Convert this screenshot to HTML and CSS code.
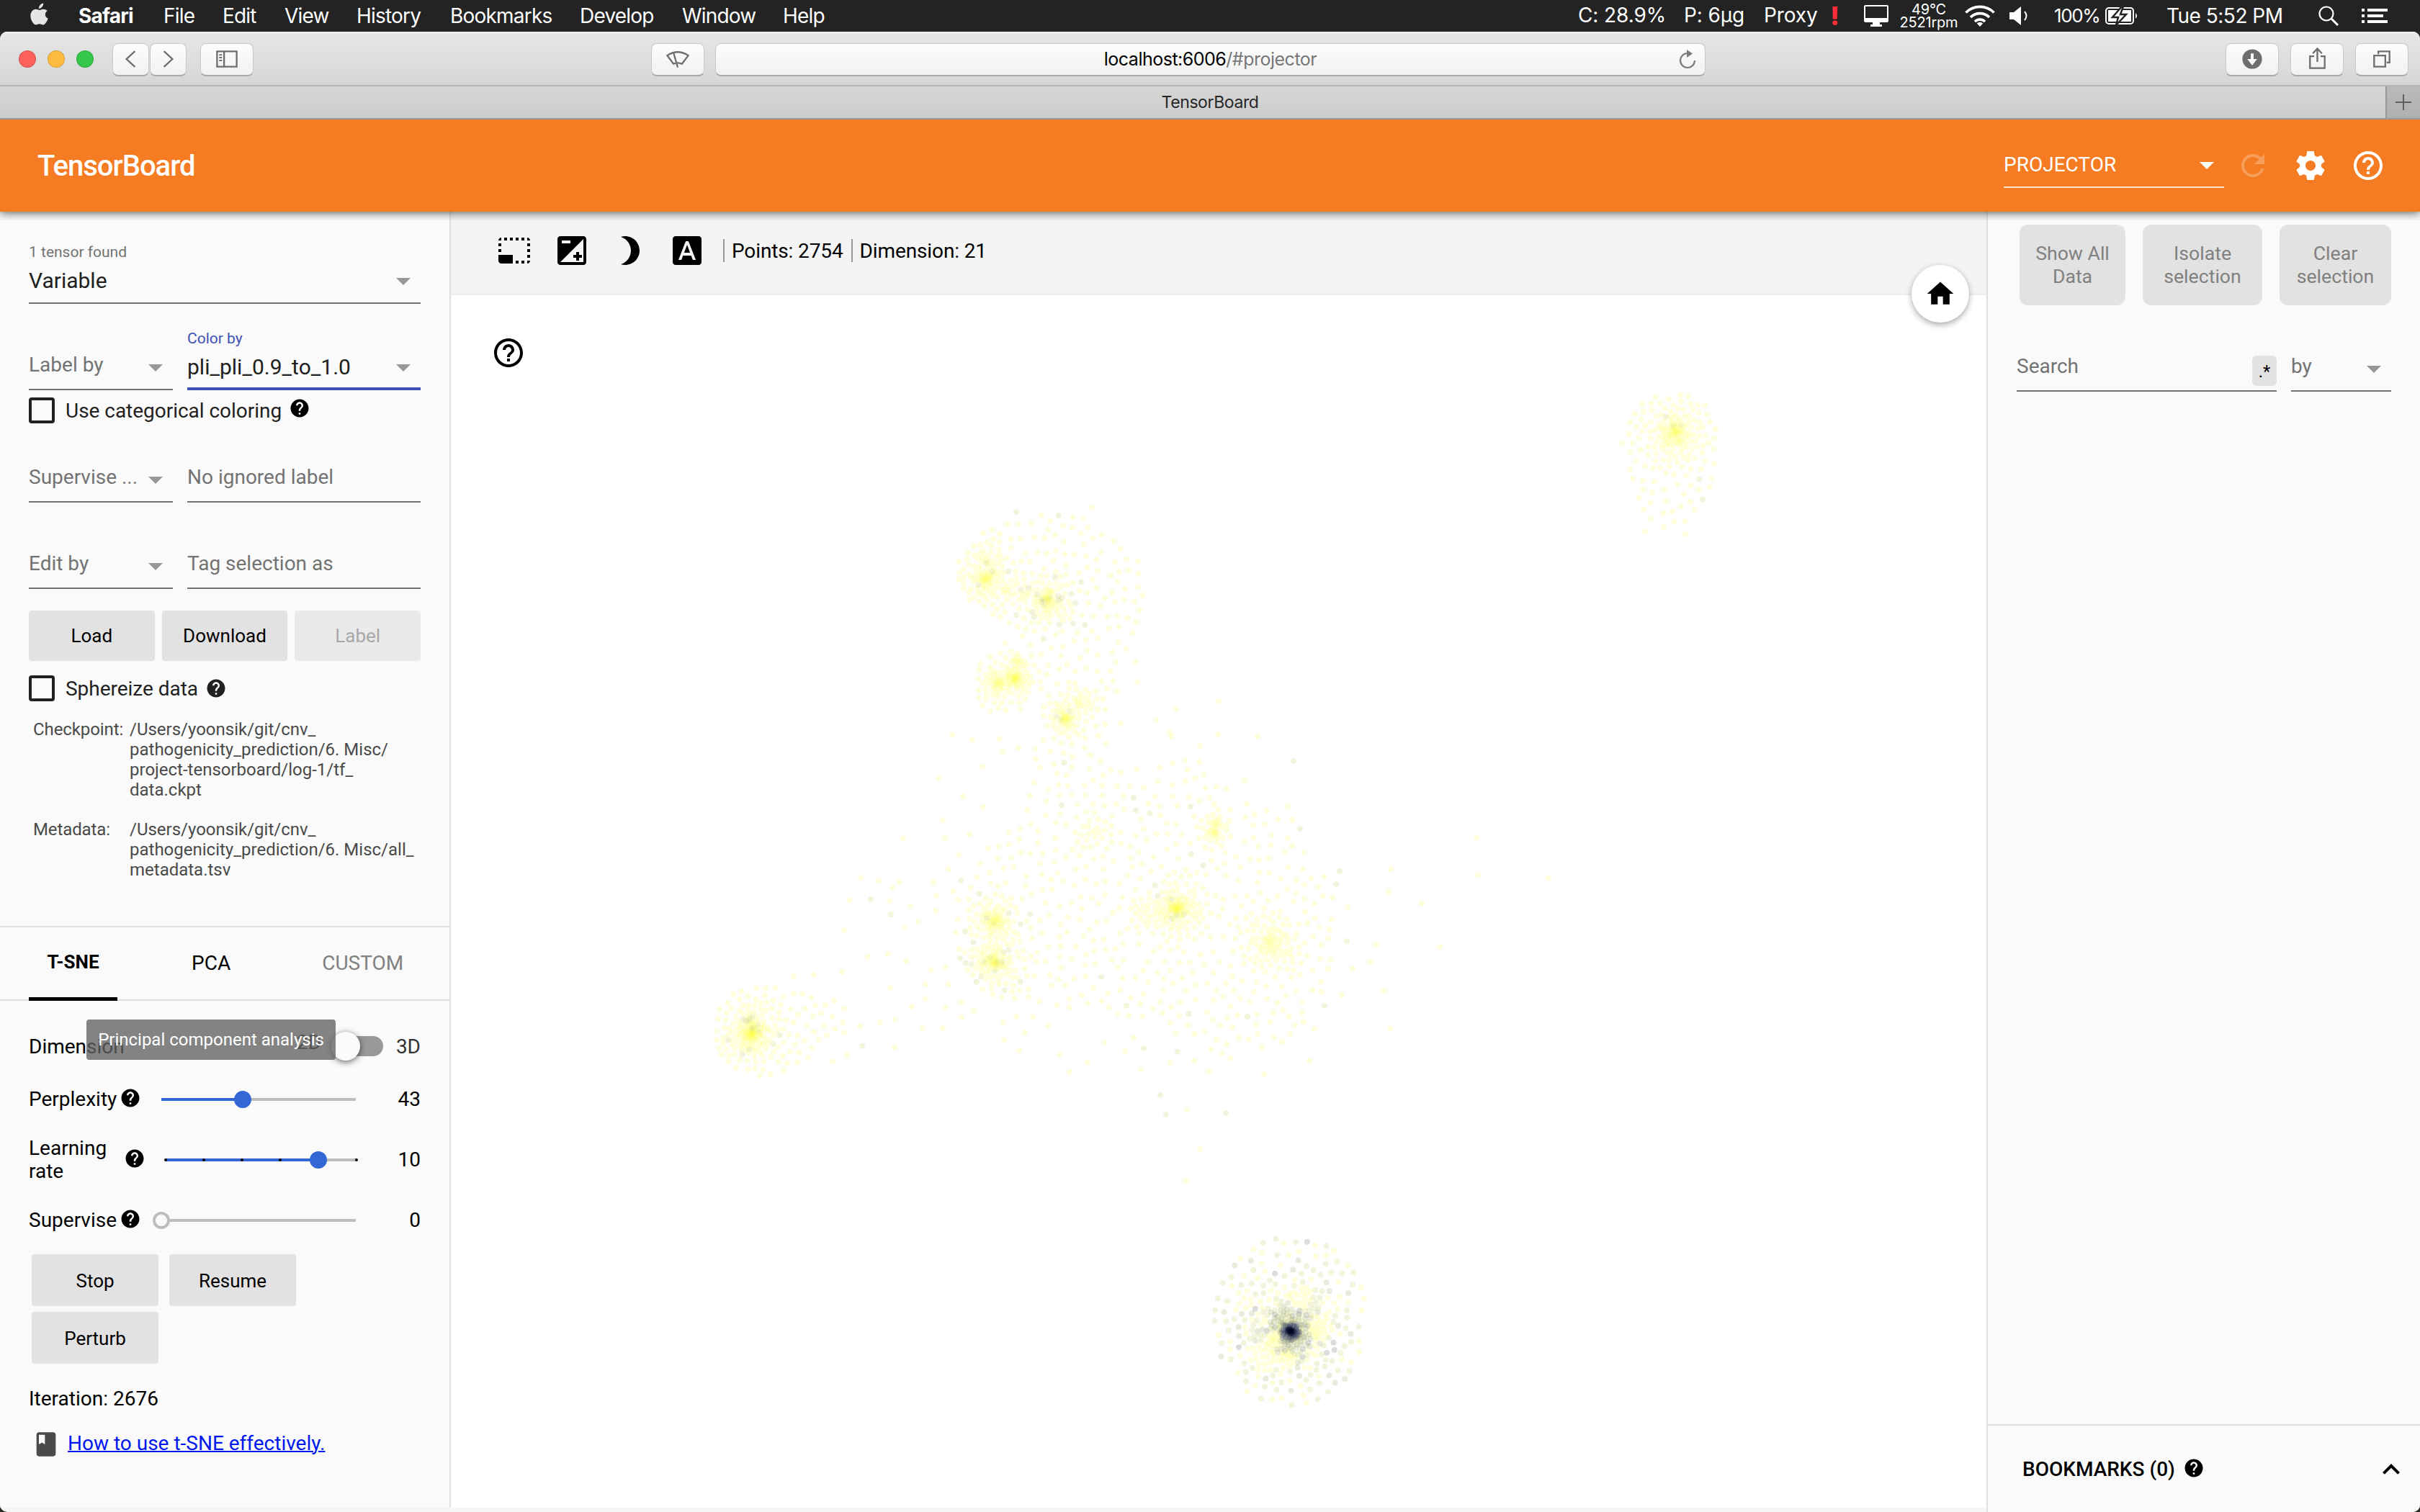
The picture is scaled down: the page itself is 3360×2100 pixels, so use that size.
FILE: index.html
```html
<!DOCTYPE html>
<html lang="en">
<head>
<meta charset="utf-8">
<title>TensorBoard</title>
<link rel="stylesheet" href="styles.css">
</head>
<body>
<svg class="sprite" aria-hidden="true">
  <symbol id="i-help" viewBox="0 0 24 24"><path d="M12 2C6.48 2 2 6.48 2 12s4.48 10 10 10 10-4.48 10-10S17.52 2 12 2zm1 17h-2v-2h2v2zm2.07-7.75l-.9.92C13.45 12.9 13 13.5 13 15h-2v-.5c0-1.1.45-2.1 1.17-2.83l1.24-1.26c.37-.36.59-.86.59-1.41 0-1.1-.9-2-2-2s-2 .9-2 2H8c0-2.21 1.79-4 4-4s4 1.79 4 4c0 .88-.36 1.68-.93 2.25z"/></symbol>
  <symbol id="i-help-outline" viewBox="0 0 24 24"><path d="M11 18h2v-2h-2v2zm1-16C6.48 2 2 6.48 2 12s4.48 10 10 10 10-4.48 10-10S17.52 2 12 2zm0 18c-4.41 0-8-3.59-8-8s3.59-8 8-8 8 3.59 8 8-3.59 8-8 8zm0-14c-2.21 0-4 1.79-4 4h2c0-1.1.9-2 2-2s2 .9 2 2c0 2-3 1.75-3 5h2c0-2.25 3-2.5 3-5 0-2.21-1.79-4-4-4z"/></symbol>
  <symbol id="i-arrow" viewBox="0 0 24 24"><path d="M7 10l5 5 5-5z"/></symbol>
</svg>

<div class="menubar">
  <nav class="menus">
    <svg class="apple" viewBox="0 0 26 32"><path d="M18.2 0.4c.2 2-.6 3.9-1.7 5.2-1.200 1.400-3 2.400-4.600 2.300-.2-1.900.7-3.800 1.700-5 1.200-1.400 3.100-2.400 4.600-2.500zM23.900 11.100c-2.100 1.300-3.100 3-3.100 5.200 0 2.500 1.500 4.600 3.900 5.500-.5 1.700-1.300 3.400-2.400 5-1.200 1.800-2.500 3.700-4.600 3.700-2 0-2.600-1.200-4.900-1.200-2.400 0-3.100 1.200-5 1.200-2 0-3.500-2-4.800-3.900C.600 23.100-.9 16.600 1.700 12.400c1.300-2.300 3.600-3.700 6-3.700 2.200 0 3.600 1.200 5.400 1.200 1.700 0 2.800-1.200 5.300-1.200 2.100 0 4.200 1 5.500 2.400z"/></svg>
    <span class="app">Safari</span><span>File</span><span>Edit</span><span>View</span><span>History</span><span>Bookmarks</span><span>Develop</span><span>Window</span><span>Help</span>
  </nav>
  <div class="extras">
    <span>C: 28.9%</span><span>P: 6µg</span><span>Proxy</span><b class="alert">!</b>
    <svg class="monitor" viewBox="0 0 34 30"><path fill-rule="evenodd" d="M2 0h30q2 0 2 2v20q0 2-2 2H22v3h3v3H9v-3h3v-3H2q-2 0-2-2V2q0-2 2-2zM2 2v16h30V2z"/></svg>
    <span class="fan"><i>49°C</i><i>2521rpm</i></span>
    <svg class="wifi" viewBox="0 0 42 30"><g fill="none" stroke="#fff" stroke-width="3.600"><path d="M1.500 10.500a27.500 27.500 0 0 1 39 0"/><path d="M8 17a18.400 18.400 0 0 1 26 0"/><path d="M14 23a10 10 0 0 1 14 0"/></g><path d="M21 30l-4.200-4.600a6 6 0 0 1 8.400 0z"/></svg>
    <svg class="speaker" viewBox="0 0 28 26"><path d="M0 8h6L16 0v26L6 18H0z"/><path d="M21 7q5 6 0 12" fill="none" stroke="#fff" stroke-width="2"/></svg>
    <span class="pct">100%</span>
    <svg class="battery" viewBox="0 0 46 24"><rect x="1" y="1" width="38" height="22" rx="4" fill="none" stroke="#fff" stroke-width="2"/><rect x="4" y="4" width="32" height="16"/><path d="M42 8q4 4 0 8z"/><path d="M23-1L10 14h8l-3 11 14-15h-8l4-11z" stroke="#232323" stroke-width="2.500"/></svg>
    <span class="clock">Tue 5:52 PM</span>
    <svg class="spot" viewBox="0 0 30 28"><g fill="none" stroke="#fff"><circle cx="11" cy="11" r="9.500" stroke-width="2.200"/><path d="M18 18l9 9" stroke-width="3"/></g></svg>
    <svg class="list" viewBox="0 0 36 20"><path d="M0 0h4v4H0zM8 0h28v4H8zM0 8h4v4H0zM8 8h22v4H8zM0 16h4v4H0zM8 16h28v4H8z"/></svg>
  </div>
</div>

<div class="window">
  <div class="toolbar">
    <i class="light red"></i><i class="light yellow"></i><i class="light green"></i>
    <div class="btn back"><svg viewBox="0 0 50 44"><path d="M31 11L19 22l12 11"/></svg></div>
    <div class="btn fwd"><svg viewBox="0 0 50 44"><path d="M19 11l12 11-12 11"/></svg></div>
    <div class="btn side"><svg viewBox="0 0 74 44"><path d="M23 11h28v22H23zM33 11v22"/><path d="M26 16h4M26 20h4M26 24h4" stroke-width="2"/></svg></div>
    <div class="btn shield"><svg viewBox="0 0 74 44"><path d="M22 17q15-10 30 0l-9 12q-6-3-12 0zM37 34l-6-21"/></svg></div>
    <div class="url"><span>localhost:6006</span><span class="path">/#projector</span>
      <svg class="reload" viewBox="0 0 24 28"><path d="M12 5A10 10 0 1 0 22 15" fill="none" stroke="#7a7a7a" stroke-width="2.200"/><path d="M11 0l8 5.500-8 5.500z" fill="#7a7a7a"/></svg></div>
    <div class="btn dl"><svg viewBox="0 0 74 44"><circle cx="37" cy="22" r="14" fill="#6e6e6e" stroke="none"/><path d="M37 14v10" stroke="#fff" stroke-width="4"/><path d="M30 22h14l-7 9z" fill="#fff" stroke="none"/></svg></div>
    <div class="btn share"><svg viewBox="0 0 74 44"><path d="M33 18h-6v17h21V18h-6M37.500 26V8M31 14l6.500-7 6.500 7"/></svg></div>
    <div class="btn tabs-btn"><svg viewBox="0 0 74 44"><path d="M26 17h16v16H26zM32 15v-4h16v16h-4"/></svg></div>
  </div>
  <div class="tabbar"><div class="tab">TensorBoard</div><div class="newtab"><svg viewBox="0 0 24 24"><path d="M12 1v22M1 12h22"/></svg></div></div>

  <header class="header">
    <h1>TensorBoard</h1>
    <div class="picker"><span>PROJECTOR</span><svg class="ic48"><use href="#i-arrow"/></svg></div>
    <svg class="ic48 refresh" viewBox="0 0 24 24"><path d="M17.65 6.350C16.200 4.900 14.210 4 12 4c-4.420 0-7.990 3.580-7.990 8s3.570 8 7.990 8c3.730 0 6.840-2.550 7.730-6h-2.080c-.82 2.330-3.040 4-5.650 4-3.310 0-6-2.690-6-6s2.690-6 6-6c1.660 0 3.140.69 4.220 1.780L13 11h7V4l-2.350 2.350z"/></svg>
    <svg class="ic48" viewBox="0 0 24 24"><path d="M19.43 12.980c.04-.32.07-.64.07-.98s-.03-.66-.07-.98l2.110-1.650c.19-.15.24-.42.12-.64l-2-3.460c-.12-.22-.39-.3-.61-.22l-2.490 1c-.52-.4-1.080-.73-1.690-.98l-.38-2.650C14.460 2.180 14.250 2 14 2h-4c-.25 0-.46.18-.49.42l-.38 2.650c-.61.25-1.170.59-1.690.98l-2.490-1c-.23-.09-.49 0-.61.22l-2 3.460c-.13.22-.07.49.12.64l2.110 1.650c-.04.32-.07.65-.07.98s.03.66.07.98l-2.110 1.650c-.19.15-.24.42-.12.64l2 3.460c.12.22.39.3.61.22l2.490-1c.52.4 1.080.73 1.690.98l.38 2.650c.03.24.24.42.49.42h4c.25 0 .46-.18.49-.42l.38-2.650c.61-.25 1.170-.59 1.690-.98l2.490 1c.23.09.49 0 .61-.22l2-3.460c.12-.22.07-.49-.12-.64l-2.110-1.650zM12 15.500c-1.930 0-3.500-1.570-3.500-3.500s1.570-3.500 3.500-3.500 3.500 1.570 3.500 3.500-1.570 3.500-3.500 3.500z"/></svg>
    <svg class="ic48"><use href="#i-help-outline"/></svg>
  </header>

  <main class="main">
    <aside class="left">
      <section class="data">
        <div class="row">
          <div class="field grow"><div class="float">1 tensor found</div><div class="value"><span>Variable</span><svg class="ic48"><use href="#i-arrow"/></svg></div></div>
        </div>
        <div class="row second">
          <div class="field narrow"><div class="float"></div><div class="value ph"><span>Label by</span><svg class="ic48"><use href="#i-arrow"/></svg></div></div>
          <div class="field grow focus"><div class="float">Color by</div><div class="value"><span>pli_pli_0.9_to_1.0</span><svg class="ic48"><use href="#i-arrow"/></svg></div></div>
        </div>
        <div class="check first"><i class="box"></i><span>Use categorical coloring</span><svg class="ic30 raised"><use href="#i-help"/></svg></div>
        <div class="row">
          <div class="field narrow"><div class="float"></div><div class="value ph"><span>Supervise ...</span><svg class="ic48"><use href="#i-arrow"/></svg></div></div>
          <div class="field grow"><div class="float"></div><div class="value ph"><span>No ignored label</span></div></div>
        </div>
        <div class="row second">
          <div class="field narrow"><div class="float"></div><div class="value ph"><span>Edit by</span><svg class="ic48"><use href="#i-arrow"/></svg></div></div>
          <div class="field grow"><div class="float"></div><div class="value ph"><span>Tag selection as</span></div></div>
        </div>
        <div class="actions"><div class="flat">Load</div><div class="flat">Download</div><div class="flat off">Label</div></div>
        <div class="check sphere"><i class="box"></i><span>Sphereize data</span><svg class="ic30"><use href="#i-help"/></svg></div>
        <dl class="paths">
          <dt>Checkpoint:</dt><dd>/Users/yoonsik/git/cnv_<br>pathogenicity_prediction/6. Misc/<br>project-tensorboard/log-1/tf_<br>data.ckpt</dd>
          <dt>Metadata:</dt><dd>/Users/yoonsik/git/cnv_<br>pathogenicity_prediction/6. Misc/all_<br>metadata.tsv</dd>
        </dl>
      </section>
      <nav class="tabs"><span class="t on">T-SNE</span><span class="t pca">PCA</span><span class="t custom">CUSTOM</span></nav>
      <section class="params">
        <div class="dim"><span>Dimension</span><span class="d2">2D</span><div class="toggle"><i></i></div><span class="d3">3D</span><div class="tooltip">Principal component analysis</div></div>
        <div class="param perp"><span class="name">Perplexity<svg class="ic30"><use href="#i-help"/></svg></span><div class="slider blue" style="--v:42%"><i class="knob"></i></div><span class="num">43</span></div>
        <div class="param learn"><span class="name"><span>Learning<br>rate</span><svg class="ic30"><use href="#i-help"/></svg></span><div class="slider blue ticks" style="--v:80%"><b></b><b></b><b></b><b></b><b></b><b></b><i class="knob"></i></div><span class="num">10</span></div>
        <div class="param sup"><span class="name">Supervise<svg class="ic30"><use href="#i-help"/></svg></span><div class="slider" style="--v:0%"><i class="knob ring"></i></div><span class="num">0</span></div>
        <div class="run"><div class="flat">Stop</div><div class="flat">Resume</div><div class="flat">Perturb</div></div>
        <div class="iter">Iteration: 2676</div>
        <div class="how"><svg viewBox="0 0 24 24"><path d="M18 2H6c-1.100 0-2 .9-2 2v16c0 1.100.9 2 2 2h12c1.100 0 2-.9 2-2V4c0-1.100-.9-2-2-2zM6 4h5v8l-2.500-1.500L6 12V4z"/></svg><a href="#">How to use t-SNE effectively.</a></div>
      </section>
    </aside>

    <section class="center">
      <div class="tools">
        <svg class="ic48" viewBox="0 0 24 24"><path d="M23 15h-2v2h2v-2zm0-4h-2v2h2v-2zm0 8h-2v2c1 0 2-1 2-2zM15 3h-2v2h2V3zm8 4h-2v2h2V7zm-2-4v2h2c0-1-1-2-2-2zM3 21h8v-6H1v4c0 1.100.9 2 2 2zM3 7H1v2h2V7zm12 12h-2v2h2v-2zm4-16h-2v2h2V3zm0 16h-2v2h2v-2zM3 3C2 3 1 4 1 5h2V3zm0 8H1v2h2v-2zm8-8H9v2h2V3zM7 3H5v2h2V3z"/></svg>
        <svg class="ic48" viewBox="0 0 24 24"><path d="M15 17v2h2v-2h2v-2h-2v-2h-2v2h-2v2h2zm5-15H4c-1.100 0-2 .9-2 2v16c0 1.100.9 2 2 2h16c1.100 0 2-.9 2-2V4c0-1.100-.9-2-2-2zM5 5h6v2H5V5zm15 15H4L20 4v16z"/></svg>
        <svg class="ic48" viewBox="0 0 24 24"><path d="M9 2c-1.050 0-2.050.16-3 .46 4.060 1.270 7 5.060 7 9.540 0 4.480-2.940 8.270-7 9.540.95.3 1.950.46 3 .46 5.520 0 10-4.480 10-10S14.520 2 9 2z"/></svg>
        <svg class="ic48" viewBox="0 0 24 24"><path d="M9.930 13.500h4.140L12 7.980zM20 2H4c-1.100 0-2 .9-2 2v16c0 1.100.9 2 2 2h16c1.100 0 2-.9 2-2V4c0-1.100-.9-2-2-2zm-4.050 16.500l-1.140-3H9.170l-1.120 3H5.960l5.110-13h1.860l5.110 13h-2.090z"/></svg>
        <span class="stat">Points: 2754</span><span class="stat">Dimension: 21</span>
        <div class="fab"><svg viewBox="0 0 24 24"><path d="M10 20v-6h4v6h5v-8h3L12 3 2 12h3v8z"/></svg></div>
      </div>
      <div class="plot">
        <canvas id="scatter" width="2132" height="1684"></canvas>
        <svg class="ic48 hint"><use href="#i-help-outline"/></svg>
      </div>
    </section>

    <aside class="right">
      <div class="sel"><div class="s1">Show All<br>Data</div><div class="s2">Isolate<br>selection</div><div class="s3">Clear<br>selection</div></div>
      <div class="search"><div class="q"><span>Search</span><b>.*</b></div><div class="by"><span>by</span><svg class="ic48"><use href="#i-arrow"/></svg></div></div>
      <div class="bookmarks"><span>BOOKMARKS (0)</span><svg class="ic30"><use href="#i-help"/></svg><svg class="ic48 up" viewBox="0 0 24 24"><path d="M12 8l-6 6 1.410 1.410L12 10.830l4.590 4.580L18 14z"/></svg></div>
    </aside>
  </main>
</div>
<script src="scatter.js"></script>
</body>
</html>
```
FILE: styles.css
```css
* { box-sizing: border-box; }
html, body { margin: 0; width: 3360px; height: 2100px; overflow: hidden; }
body { background: #2b2d24; font-family: Roboto, "Liberation Sans", sans-serif; font-size: 28px; color: #000; display: flex; flex-direction: column; }
i { font-style: normal; }
.sprite { position: absolute; width: 0; height: 0; }
svg { display: block; flex: none; }
.ic48 { width: 48px; height: 48px; }
.ic30 { width: 30px; height: 30px; }

/* system menu bar */
.menubar { height: 44px; flex: none; background: #232323; color: #fff; fill: #fff; display: flex; justify-content: space-between; font-family: Inter, sans-serif; font-size: 28px; letter-spacing: -0.8px; line-height: 44px; white-space: nowrap; }
.menus { display: grid; grid-template-columns: 67px 118px 82px 86px 100px 130px 180px 142px 140px 80px; margin-left: 42px; }
.apple { width: 26px; height: 32px; margin-top: 4px; fill: #e4e4e4; }
.app { font-weight: 700; }
.extras { display: flex; align-items: center; width: 1169px; }
.extras > span:nth-child(1) { width: 147px; }
.extras > span:nth-child(2) { width: 111px; }
.extras > span:nth-child(3) { width: 92px; }
.extras > span:nth-child(-n+3) { line-height: 40px; margin-top: -3px; letter-spacing: -.1px; }
.alert { color: #ff2d37; font-size: 36px; width: 47px; line-height: 36px; font-weight: 800; }
.monitor { width: 34px; height: 30px; margin-right: 16px; }
.fan { width: 80px; display: flex; flex-direction: column; align-items: center; font-size: 20px; line-height: 18px; margin-right: 10px; letter-spacing: -0.200px; }
.wifi { width: 42px; height: 30px; margin-right: 20px; }
.speaker { width: 28px; height: 26px; margin-right: 34px; }
.pct { width: 71px; font-size: 26px; letter-spacing: -1.4px; }
.battery { width: 46px; height: 24px; margin-right: 39px; overflow: visible; }
.clock { width: 211px; letter-spacing: -.5px; }
.spot { width: 30px; height: 28px; margin-right: 30px; }
.list { width: 36px; height: 20px; }

/* browser chrome */
.window { flex: 1; min-height: 0; display: flex; flex-direction: column; border-radius: 10px; overflow: hidden; background: #f5f5f5; }
.toolbar { height: 76px; flex: none; background: linear-gradient(#fafafa 0, #e6e6e6 3px, #d6d6d6 74px); border-bottom: 2px solid #b4b4b4; display: flex; align-items: center; padding-left: 26px; font-family: Inter, sans-serif; }
.light { width: 24px; height: 24px; border-radius: 50%; margin-right: 16px; border: 1px solid rgba(0,0,0,.15); margin-top: 2px; }
.red { background: #fc605c; } .yellow { background: #fdbc40; } .green { background: #34c749; }
.btn { height: 46px; margin-top: 3px; border-radius: 8px; background: linear-gradient(#fdfdfd, #f1f1f1); border: 1px solid #c9c9c9; border-bottom: 2px solid #a9a9a9; width: 74px; display: flex; align-items: center; justify-content: center; }
.btn svg { height: 44px; width: 100%; fill: none; stroke: #6e6e6e; stroke-width: 2.400; }
.back { width: 51px; margin-left: 10px; } .fwd { width: 51px; margin-left: 1px; }
.side { margin-left: 19px; } .shield { margin-left: 552px; }
.url { width: 1375px; height: 46px; margin: 3px 722px 0 15px; border-radius: 8px; background: linear-gradient(#fdfdfd, #f1f1f1); border: 1px solid #c9c9c9; border-bottom: 2px solid #a9a9a9; display: flex; align-items: center; justify-content: center; position: relative; font-size: 25px; letter-spacing: -.5px; }
.path { color: #777; }
.reload { position: absolute; right: 12px; top: 8px; width: 24px; height: 28px; }
.share, .tabs-btn { margin-left: 16px; }
.tabbar { height: 46px; flex: none; display: flex; font: 23px/45px Inter, sans-serif; letter-spacing: -.4px; color: #262626; border-bottom: 2px solid #999; background: linear-gradient(#d5d5d5, #cdcdcd); }
.tab { flex: 1; text-align: center; padding-left: 48px; }
.newtab { width: 48px; border-left: 2px solid #969696; background: linear-gradient(#bababa, #b0b0b0); display: flex; align-items: center; justify-content: center; }
.newtab svg { width: 24px; height: 24px; stroke: #606060; stroke-width: 2; }

/* app header */
.header { height: 128px; flex: none; background: #f57c22; color: #fff; fill: #fff; display: flex; align-items: center; padding: 0 48px 0 52px; position: relative; z-index: 2; box-shadow: 0 2px 12px rgba(0,0,0,.62); clip-path: inset(0 0 -12px 0); }
h1 { margin: 0; flex: 1; font-size: 40px; font-weight: 500; letter-spacing: -1px; }
.picker { width: 306px; height: 60px; border-bottom: 2px solid rgba(255,255,255,.8); display: flex; align-items: center; justify-content: space-between; margin: 0 16px -1px 0; padding-bottom: 1px; }
.picker span { margin-top: -2px; }
.refresh { opacity: .26; }
.header .ic48 + .ic48 { margin-left: 32px; }

.main { flex: 1; min-height: 0; display: flex; }
.left { width: 626px; height: 1800px; background: #fafafa; border-right: 2px solid #e0e0e0; display: flex; flex-direction: column; }
.data { height: 994px; flex: none; padding: 42px 40px 0; border-bottom: 2px solid #e0e0e0; }
.row { display: flex; gap: 20px; }
.second { margin-top: 34px; }
.field { height: 86px; border-bottom: 2px solid #737373; }
.grow { flex: 1; } .narrow { width: 200px; }
.float { height: 28px; font-size: 21px; line-height: 28px; color: #737373; }
.value { height: 52px; display: flex; align-items: center; justify-content: space-between; font-size: 30px; color: #212121; white-space: nowrap; fill: #969696; }
.value span { margin-top: -2px; }
.value.ph { font-size: 28px; color: #737373; }
.value.ph span { margin-top: -8px; }
.focus { border-bottom: 4px solid #3f51b5; }
.focus .float { color: #3f51b5; }
.check { display: flex; align-items: center; height: 36px; color: #212121; }
.box { width: 36px; height: 36px; border: 4px solid #212121; border-radius: 4px; margin-right: 15px; }
.check span { letter-spacing: -.03px; }
.check svg { margin-left: 10px; }
.first { margin: 10px 0 24px; } .raised { margin-bottom: 6px; }
.sphere { margin-top: 20px; fill: #212121; }
.actions { display: grid; grid-template-columns: repeat(3, 1fr); gap: 10px; margin-top: 30px; }
.flat { height: 70px; background: #e2e2e2; border-radius: 4px; display: flex; align-items: center; justify-content: center; font-size: 26px; }
.off { background: #eaeaea; color: #a8a8a8; }
.paths { margin: 25px 0 0 6px; display: grid; grid-template-columns: 134px 1fr; row-gap: 27px; font-size: 24px; line-height: 28px; color: #4a4a4a; white-space: nowrap; }
.paths dt { letter-spacing: -.1px; }
.paths dd { margin: 0; }

.tabs { height: 102px; flex: none; border-bottom: 2px solid #e0e0e0; display: flex; padding-left: 40px; line-height: 99px; }
.t { height: 102px; }
.on { width: 123px; text-align: center; font-weight: 700; font-size: 26px; border-bottom: 5px solid #000; line-height: 97px; }
.pca { margin-left: 103px; } .custom { margin-left: 127px; color: #808080; }
.params { padding: 43px 40px 0; }
.dim { height: 40px; display: flex; align-items: center; position: relative; }
.d2 { margin: -12px 0 0 238px; width: 48px; color: #222; }
.dim > span:first-child { width: 134px; }
.d3 { color: #333; margin-left: 18px; }
.toggle { width: 72px; height: 28px; border-radius: 14px; background: linear-gradient(#999, #999) no-repeat 10px 0; position: relative; }
.toggle i { position: absolute; left: 0; top: -6px; width: 40px; height: 40px; border-radius: 50%; background: #fafafa; box-shadow: 0 2px 8px rgba(0,0,0,.6); }
.tooltip { position: absolute; left: 80px; top: -17px; width: 346px; height: 56px; border-radius: 4px; background: rgba(97,97,97,.78); color: #fff; font-size: 24px; line-height: 56px; text-align: center; white-space: nowrap; }
.param { display: flex; align-items: center; line-height: 32px; }
.name { display: flex; align-items: center; width: 184px; }
.name svg { margin: -5px 0 0 4px; }
.perp { height: 40px; margin-top: 34px; }
.learn { height: 64px; margin-top: 32px; }
.learn .name { width: 190px; justify-content: space-between; padding-right: 28px; }
.learn .slider { width: 265px; }
.sup { height: 40px; margin-top: 32px; }
.slider { width: 270px; height: 4px; margin-top: -1px; background: #bdbdbd; position: relative; display: flex; justify-content: space-between; }
.blue { background: linear-gradient(90deg, #3367d6 var(--v), #bdbdbd var(--v)); }
.ticks b { width: 4px; height: 4px; background: #000; border-radius: 50%; margin: 0 -2px; }
.knob { position: absolute; left: calc(var(--v) - 12px); top: -10px; width: 24px; height: 24px; border-radius: 50%; background: #3367d6; }
.ring { background: #fafafa; border: 4px solid #bdbdbd; }
.num { flex: 1; text-align: right; }
.run { display: flex; flex-wrap: wrap; gap: 8px 15px; margin: 27px 0 0 4px; }
.run .flat { width: 176px; height: 72px; padding-top: 1px; }
.iter { margin-top: 33px; line-height: 32px; }
.how { display: flex; align-items: center; margin: 25px 0 0 4px; height: 40px; }
.how svg { width: 40px; height: 40px; fill: #4a4a4a; margin: 3px 10px 0 0; }
.how a { color: #0018ee; text-decoration: underline; text-decoration-thickness: 2px; }

/* projector canvas */
.center { width: 2132px; height: 1800px; display: flex; flex-direction: column; background: #fff; }
.tools { height: 116px; flex: none; background: #f4f4f4; border-bottom: 2px solid #ececec; display: flex; align-items: flex-start; padding: 30px 0 0 64px; position: relative; }
.tools .ic48 { margin-right: 32px; }
.stat { border-left: 2px solid #999; height: 32px; line-height: 33px; margin-top: 8px; padding: 0 11px 0 10px; letter-spacing: -.12px; }
.tools .stat:nth-of-type(1) { margin-left: -6px; }
.fab { position: absolute; right: 24px; top: 74px; width: 80px; height: 80px; border-radius: 50%; background: #fff; box-shadow: 0 3px 8px rgba(0,0,0,.35); display: flex; align-items: center; justify-content: center; z-index: 1; }
.fab svg { width: 44px; height: 44px; }
.plot { height: 1684px; position: relative; }
.plot canvas { display: block; }
.hint { position: absolute; left: 56px; top: 56px; }

/* inspector */
.right { width: 602px; background: #fafafa; border-left: 2px solid #e0e0e0; display: flex; flex-direction: column; }
.sel { display: flex; padding: 18px 0 0 44px; gap: 24px; }
.sel div { height: 112px; border-radius: 12px; background: #e2e2e2; color: #808080; font-size: 26.670px; line-height: 32px; text-align: center; padding-top: 24px; }
.s1 { width: 147px; } .s2 { width: 166px; } .s3 { width: 155px; }
.search { display: flex; gap: 20px; margin: 60px 40px 0; height: 60px; color: #737373; line-height: 50px; fill: #969696; }
.q { width: 361px; border-bottom: 2px solid #737373; display: flex; justify-content: space-between; }
.q b { width: 34px; height: 42px; margin-top: 10px; border-radius: 6px; background: #e2e2e2; color: #000; font-size: 24px; font-weight: 400; line-height: 44px; text-align: center; }
.by { flex: 1; border-bottom: 2px solid #737373; display: flex; justify-content: space-between; }
.by svg { margin-top: 4px; }
.bookmarks { margin-top: auto; height: 122px; border-top: 2px solid #e0e0e0; display: flex; align-items: center; padding: 1px 16px 0 48px; font-weight: 500; }
.bookmarks .ic30 { margin: -4px auto 0 11px; }
```
FILE: scatter.js
```js
// Draws the t-SNE embedding. Coordinates are window pixels; the canvas starts at (626, 410).
(function () {
  const ctx = document.getElementById('scatter').getContext('2d');
  ctx.translate(-626, -410);

  let seed = 2754;
  function rnd() {
    seed = (seed + 0x6D2B79F5) | 0;
    let t = Math.imul(seed ^ (seed >>> 15), 1 | seed);
    t = (t + Math.imul(t ^ (t >>> 7), 61 | t)) ^ t;
    return ((t ^ (t >>> 14)) >>> 0) / 4294967296;
  }

  // x, y, minimum spacing at the centre, spacing growth, reach, share of grey points
  const cores = [
    [2326, 600, 1.7, .15, 60, .02],
    [1368, 804, 1.8, .17, 45, .02],
    [1370, 780, 3.6, .17, 30, .02],
    [1398, 820, 4, .17, 30, .12],
    [1425, 824, 4.2, .16, 30, .2],
    [1456, 833, 1.9, .17, 45, .2],
    [1385, 949, 2, .22, 25, 0],
    [1409, 942, 1.3, .22, 30, 0],
    [1412, 920, 3, .25, 20, 0],
    [1480, 998, 1.7, .22, 35, .03],
    [1497, 975, 3.4, .2, 20, .03],
    [1518, 1155, 5.5, .18, 40, .02],
    [1685, 1156, 1.8, .33, 25, .02],
    [1688, 1145, 2.4, .33, 20, .02],
    [1634, 1262, 1.3, .16, 50, .04],
    [1590, 1268, 4.6, .16, 30, .02],
    [1381, 1280, 1.7, .17, 40, .06],
    [1381, 1337, 1.6, .16, 45, .12],
    [1762, 1308, 2.8, .14, 50, .03],
    [1790, 1325, 5.5, .16, 30, .03],
    [1043, 1436, 1.4, .15, 55, .04],
    [1040, 1419, 3, .2, 20, .5]
  ];
  const shapes = [
    [[1330,770],[1365,730],[1420,712],[1500,712],[1545,740],[1590,790],[1585,870],[1550,930],[1535,1000],[1540,1070],[1430,1070],[1450,985],[1428,900],[1400,872],[1345,835],[1328,810]],
    [[1358,925],[1395,890],[1430,925],[1436,960],[1415,990],[1380,995],[1355,980]],
    [[1430,1050],[1600,1065],[1665,1050],[1720,1115],[1790,1120],[1815,1200],[1850,1210],[1856,1350],[1830,1400],[1790,1450],[1700,1465],[1560,1410],[1450,1395],[1350,1380],[1325,1330],[1330,1220],[1420,1130]],
    [[992,1420],[1005,1385],[1040,1370],[1085,1372],[1150,1385],[1185,1400],[1170,1430],[1135,1460],[1095,1490],[1050,1497],[1015,1485],[995,1455]],
    [[2252,615],[2265,575],[2290,550],[2325,545],[2365,555],[2385,600],[2385,640],[2370,690],[2345,722],[2312,735],[2285,715],[2265,670]]
  ];
  const sparse = [
    [1411,711,1],[1516,705,0],[1504,720,0],[1624,1018,0],[1605,1000,0],[1692,974,0],[1633,985,0],
    [1691,1020,0],[1627,1023,0],[1746,1023,0],[1666,1036,0],[1796,1057,1],[1556,1005,0],[1550,960,0],[1579,947,0],
    [1577,919,0],[1322,1021,0],[1350,1027,0],[1364,1065,0],[1387,1026,0],[1392,1044,0],[1414,1039,0],[1303,1081,0],
    [1254,1165,0],[1195,1219,0],[1220,1223,0],[1249,1225,0],[1239,1233,0],[1179,1250,0],[1209,1249,1],[1235,1251,0],
    [1264,1259,0],[1237,1270,1],[1275,1280,0],[1172,1292,0],[1256,1288,0],[1299,1265,0],[1296,1225,0],[1300,1244,0],
    [1317,1207,0],[1323,1238,0],[1331,1187,0],[1309,1139,0],[1312,1164,0],[1337,1106,0],[1346,1159,0],[1365,1121,0],
    [1334,1223,1],[1205,1329,0],[1233,1325,0],[1258,1335,0],[1169,1350,0],[1102,1356,0],[1130,1354,0],[1236,1372,0],
    [1293,1347,0],[1313,1343,0],[1285,1367,0],[1317,1367,0],[1285,1387,0],[1266,1398,0],[1313,1399,0],[1334,1392,0],
    [1352,1404,0],[1243,1416,0],[1222,1420,0],[1194,1425,0],[1335,1413,0],[1281,1428,0],[1309,1428,0],[1172,1434,0],
    [1197,1453,1],[1242,1455,0],[1176,1466,0],[1156,1474,0],[1393,1420,0],[1411,1412,0],[1434,1413,0],[1455,1425,0],
    [1423,1434,0],[1394,1445,0],[1415,1459,0],[1471,1465,0],[1510,1475,0],[1485,1489,0],[1533,1448,0],[1588,1456,1],
    [1562,1460,0],[1574,1441,0],[1584,1485,0],[1625,1476,0],[1635,1461,1],[1658,1473,0],[1679,1488,0],[1755,1492,0],
    [1818,1473,0],[1709,1470,0],[1752,1455,0],[1769,1441,0],[1734,1443,0],[1732,1412,1],[1791,1436,0],[1825,1429,0],
    [1839,1397,1],[1863,1382,0],[1930,1429,0],[1922,1376,0],[1878,1345,0],[1903,1336,0],[1911,1312,0],[1870,1307,1],
    [1999,1315,0],[1974,1255,0],[1871,1260,0],[1928,1238,0],[1931,1207,0],[2052,1215,0],[2150,1219,0],[2050,1163,0],
    [1860,1210,1],[1855,1228,1],[1850,1247,0],[1811,1184,0],[1805,1151,1],[1765,1160,0],[1794,1175,0],[1740,1146,0],
    [1728,1084,0],[1689,1093,0],[1708,1125,0],[1707,1140,0],[1611,1521,1],[1648,1541,0],[1619,1548,1],[1702,1546,1],
    [1666,1596,0],[1646,1640,0],[2340,742,0],[2284,738,0]
  ];

  const pts = sparse.slice();
  function inside(p, x, y) {
    let c = false;
    for (let i = 0, j = p.length - 1; i < p.length; j = i++) {
      if ((p[i][1] > y) !== (p[j][1] > y) && x < (p[j][0] - p[i][0]) * (y - p[i][1]) / (p[j][1] - p[i][1]) + p[i][0]) c = !c;
    }
    return c;
  }
  function tryAdd(x, y, gap, tone) {
    for (const p of pts) {
      const dx = p[0] - x, dy = p[1] - y;
      if (dx * dx + dy * dy < gap * gap) return;
    }
    pts.push([x, y, tone]);
  }

  // Dense groups and the haze between them.
  for (let n = 0; n < 26000; n++) {
    let x, y;
    if (n % 2) {
      const c = cores[Math.floor(rnd() * cores.length)];
      const r = c[4] * Math.pow(rnd(), 1.3), a = rnd() * 6.2832;
      x = c[0] + r * Math.cos(a);
      y = c[1] + r * Math.sin(a);
    } else {
      const s = shapes[Math.floor(rnd() * shapes.length)];
      const xs = s.map(p => p[0]), ys = s.map(p => p[1]);
      x = Math.min(...xs) + rnd() * (Math.max(...xs) - Math.min(...xs));
      y = Math.min(...ys) + rnd() * (Math.max(...ys) - Math.min(...ys));
    }
    if (!shapes.some(s => inside(s, x, y))) continue;
    let gap = 12.4, grey = .035;
    for (const c of cores) {
      const d = Math.hypot(x - c[0], y - c[1]);
      const g = c[2] + c[3] * d;
      if (g < gap) { gap = g; grey = c[5]; }
    }
    tryAdd(x, y, gap, rnd() < grey ? 1 : 0);
  }

  // The dark group at the bottom.
  const cx = 1792, cy = 1849;
  const pale = [[1728, 1803, 14], [1806, 1800, 16], [1834, 1842, 17], [1766, 1862, 12], [1755, 1885, 20], [1785, 1890, 14]];
  for (let n = 0; n < 9000; n++) {
    const a = rnd() * 6.2832, r = Math.pow(rnd(), 1.1);
    const x = cx + 106 * r * Math.cos(a), y = cy + 120 * r * Math.sin(a) - 14 * r;
    const d = Math.hypot(x - cx, y - cy);
    let tone;
    const q = rnd();
    if (d < 5) tone = 5;
    else if (d < 13) tone = q < .6 ? 4 : 3;
    else if (d < 36) tone = q < .22 ? 3 : q < .72 ? 2 : 1;
    else tone = q < .4 ? 0 : q < .86 ? 1 : q < .985 ? 2 : 3;
    const inPale = pale.some(p => Math.hypot(x - p[0], y - p[1]) < p[2]);
    if (inPale) tone = 0;
    tryAdd(x, y, Math.min(12, (inPale ? 1.5 : 1.5) + (inPale ? .08 : .105) * d), tone);
  }

  const tones = ['rgba(255,255,50,.16)', 'rgba(180,188,40,.16)', 'rgba(120,135,40,.16)', 'rgba(60,72,65,.18)', 'rgba(20,28,75,.24)', 'rgba(0,2,28,.42)'];
  for (const p of pts) {
    ctx.fillStyle = tones[p[2]];
    ctx.beginPath();
    ctx.arc(p[0], p[1], 4, 0, 6.2832);
    ctx.fill();
  }
})();
```
